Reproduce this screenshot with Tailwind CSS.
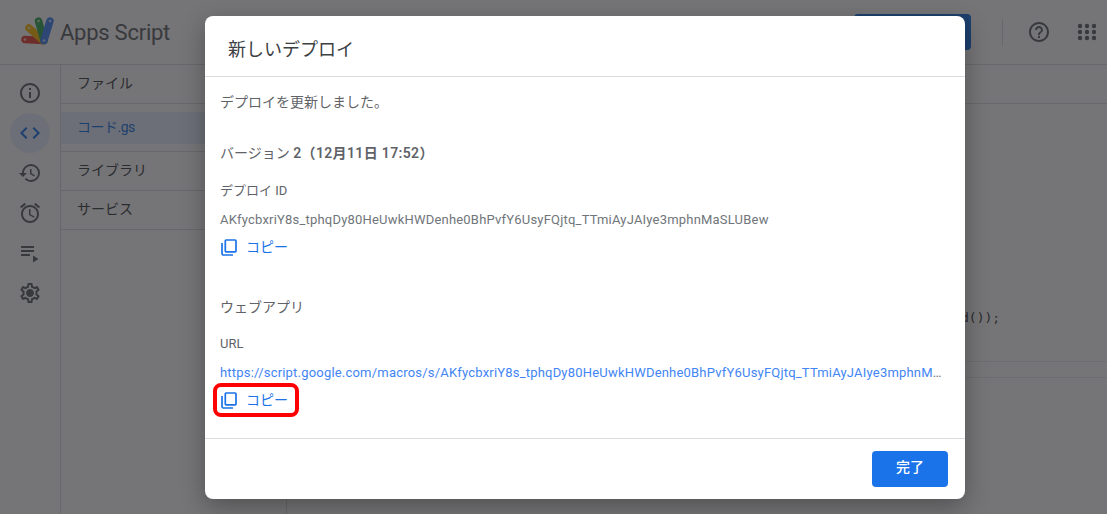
<!DOCTYPE html>
<html lang="ja">
<head>
<meta charset="UTF-8">
<title>Apps Script</title>
<script src="https://cdn.jsdelivr.net/npm/@tailwindcss/browser@4"></script>
</head>
<body class="bg-white overflow-hidden font-['Roboto','Noto_Sans_CJK_JP',sans-serif] text-[#3c4043]">
<div class="relative w-[1107px] h-[514px] overflow-hidden">

  <!-- App behind the dialog -->
  <div class="flex flex-col h-full">
    <header class="h-[65px] shrink-0 flex items-center border-b border-[#dadce0]">
      <svg class="ml-[21px] w-[34px] h-[34px]" viewBox="0 0 34 34" fill="none" stroke-width="7.5" stroke-linecap="round">
        <path d="M4 24.5 22 25.5" stroke="#ea4335"/>
        <path d="M8 13 22 25.5" stroke="#fbbc04"/>
        <path d="M17.5 6 23 25.5" stroke="#34a853"/>
        <path d="M29 6 23 25.5" stroke="#4285f4"/>
        <g fill="#ffffff" stroke="none" opacity=".7">
          <circle cx="4" cy="24.5" r="1.3"/><circle cx="8" cy="13" r="1.3"/><circle cx="17.5" cy="6" r="1.3"/><circle cx="29" cy="6" r="1.3"/><circle cx="23" cy="25.5" r="1.3"/>
        </g>
      </svg>
      <span class="ml-[5px] text-[22px] tracking-[-0.25px] text-[#5f6368]">Apps Script</span>
      <div class="ml-auto w-[117px] h-[36px] mt-[-1px] rounded bg-[#1a73e8]"></div>
      <div class="ml-[31px] w-px h-[27px] bg-[#dadce0]"></div>
      <svg class="ml-[24px] w-6 h-6" viewBox="0 0 24 24" fill="#5f6368"><path d="M11 18h2v-2h-2v2zm1-16C6.48 2 2 6.48 2 12s4.48 10 10 10 10-4.48 10-10S17.52 2 12 2zm0 18c-4.41 0-8-3.59-8-8s3.59-8 8-8 8 3.59 8 8-3.59 8-8 8zm0-14c-2.21 0-4 1.79-4 4h2c0-1.1.9-2 2-2s2 .9 2 2c0 2-3 1.75-3 5h2c0-2.25 3-2.5 3-5 0-2.21-1.79-4-4-4z"/></svg>
      <svg class="ml-[24px] mr-[8px] w-6 h-6" viewBox="0 0 24 24" fill="#5f6368"><circle cx="5" cy="6" r="2.2"/><circle cx="12" cy="6" r="2.2"/><circle cx="19" cy="6" r="2.2"/><circle cx="5" cy="12" r="2.2"/><circle cx="12" cy="12" r="2.2"/><circle cx="19" cy="12" r="2.2"/><circle cx="5" cy="18" r="2.2"/><circle cx="12" cy="18" r="2.2"/><circle cx="19" cy="18" r="2.2"/></svg>
    </header>
    <div class="flex flex-1 min-h-0">
      <!-- Icon rail -->
      <nav class="w-[61px] shrink-0 border-r border-[#dadce0] flex flex-col items-center pt-[8px] pr-px">
        <div class="h-[40px] flex items-center justify-center"><svg class="w-6 h-6" viewBox="0 0 24 24" fill="#5f6368"><path d="M11 7h2v2h-2zm0 4h2v6h-2zm1-9C6.48 2 2 6.48 2 12s4.48 10 10 10 10-4.48 10-10S17.52 2 12 2zm0 18c-4.41 0-8-3.59-8-8s3.59-8 8-8 8 3.59 8 8-3.59 8-8 8z"/></svg></div>
        <div class="w-10 h-10 rounded-full bg-[#e8f0fe] flex items-center justify-center"><svg class="w-6 h-6" viewBox="0 0 24 24" fill="#1a73e8"><path d="M9.4 16.6 4.8 12l4.6-4.6L8 6l-6 6 6 6 1.4-1.4zm5.2 0 4.6-4.6-4.6-4.6L16 6l6 6-6 6-1.4-1.4z"/></svg></div>
        <div class="h-[40px] flex items-center justify-center"><svg class="w-6 h-6" viewBox="0 0 24 24" fill="#5f6368"><path d="M13 3a9 9 0 0 0-9 9H1l3.89 3.89.07.14L9 12H6c0-3.87 3.13-7 7-7s7 3.13 7 7-3.13 7-7 7c-1.93 0-3.68-.79-4.94-2.06l-1.42 1.42A8.954 8.954 0 0 0 13 21a9 9 0 0 0 0-18zm-1 5v5l4.28 2.54.72-1.21-3.5-2.08V8H12z"/></svg></div>
        <div class="h-[40px] flex items-center justify-center"><svg class="w-6 h-6" viewBox="0 0 24 24" fill="#5f6368"><path d="m22 5.72-4.6-3.86-1.29 1.53 4.6 3.86L22 5.72zM7.88 3.39 6.6 1.86 2 5.71l1.29 1.53 4.59-3.85zM12.5 8H11v6l4.75 2.85.75-1.23-4-2.37V8zM12 4c-4.97 0-9 4.03-9 9s4.03 9 9 9 9-4.03 9-9-4.03-9-9-9zm0 16c-3.87 0-7-3.13-7-7s3.13-7 7-7 7 3.13 7 7-3.13 7-7 7z"/></svg></div>
        <div class="h-[40px] flex items-center justify-center"><svg class="w-6 h-6" viewBox="0 0 24 24" fill="#5f6368"><path d="M3 5h13v2H3zm0 4h13v2H3zm0 4h9v2H3zm12 1.5v7l5.5-3.5z"/></svg></div>
        <div class="h-[40px] flex items-center justify-center"><svg class="w-6 h-6" viewBox="0 0 24 24" fill="#5f6368"><path d="M19.43 12.98c.04-.32.07-.64.07-.98s-.03-.66-.07-.98l2.11-1.65c.19-.15.24-.42.12-.64l-2-3.46c-.12-.22-.39-.3-.61-.22l-2.49 1c-.52-.4-1.08-.73-1.69-.98l-.38-2.65A.488.488 0 0 0 14 2h-4c-.25 0-.46.18-.49.42l-.38 2.65c-.61.25-1.17.59-1.69.98l-2.49-1c-.23-.09-.49 0-.61.22l-2 3.46c-.13.22-.07.49.12.64l2.11 1.65c-.04.32-.07.65-.07.98s.03.66.07.98l-2.11 1.65c-.19.15-.24.42-.12.64l2 3.46c.12.22.39.3.61.22l2.49-1c.52.4 1.08.73 1.69.98l.38 2.65c.03.24.24.42.49.42h4c.25 0 .46-.18.49-.42l.38-2.65c.61-.25 1.17-.59 1.69-.98l2.49 1c.23.09.49 0 .61-.22l2-3.46c.12-.22.07-.49-.12-.64l-2.11-1.65zM17.45 11.27c.04.31.05.52.05.73 0 .21-.02.43-.05.73l-.14 1.13.89.7 1.08.84-.7 1.21-1.27-.51-1.04-.42-.9.68c-.43.32-.84.56-1.25.73l-1.06.43-.16 1.13-.2 1.35h-1.4l-.19-1.35-.16-1.13-1.06-.43c-.43-.18-.83-.41-1.23-.71l-.91-.7-1.06.43-1.27.51-.7-1.21 1.08-.84.89-.7-.14-1.13c-.03-.31-.05-.54-.05-.74s.02-.43.05-.73l.14-1.13-.89-.7-1.08-.84.7-1.21 1.27.51 1.04.42.9-.68c.43-.32.84-.56 1.25-.73l1.06-.43.16-1.13.2-1.35h1.39l.19 1.35.16 1.13 1.06.43c.43.18.83.41 1.23.71l.91.7 1.06-.43 1.27-.51.7 1.21-1.07.85-.89.7.14 1.13zM12 8c-2.21 0-4 1.79-4 4s1.79 4 4 4 4-1.79 4-4-1.79-4-4-4z"/></svg></div>
      </nav>
      <!-- File panel -->
      <aside class="w-[226px] shrink-0 border-r border-[#dadce0] text-[14px]">
        <div class="h-[39px] flex items-center pl-4 border-b border-[#dadce0] pb-[2px]">ファイル</div>
        <div class="h-[48px] flex items-center border-b border-[#dadce0]"><div class="w-full h-[32px] flex items-center pl-4 bg-[#e8f0fe] text-[#1a73e8] tracking-[-0.5px]">コード.gs</div></div>
        <div class="h-[39px] flex items-center pl-4 border-b border-[#dadce0] pb-[2px]">ライブラリ</div>
        <div class="h-[39px] flex items-center pl-4 border-b border-[#dadce0] pb-[2px]">サービス</div>
      </aside>
      <!-- Editor -->
      <main class="flex-1 flex flex-col min-w-0">
        <div class="h-[39px] shrink-0 border-b border-[#dadce0]"></div>
        <div class="h-[258px] shrink-0 flex flex-col justify-end border-b border-[#e8eaed]">
          <div class="pl-[674px] pb-[34px] h-[72px] flex items-end whitespace-nowrap font-['DejaVu_Sans_Mono',monospace] text-[13px] leading-[18px] text-[#3c4043]">d());</div>
        </div>
        <div class="h-[16px] shrink-0 border-b border-[#e8eaed]"></div>
      </main>
    </div>
  </div>

  <!-- Scrim -->
  <div class="absolute inset-0 bg-[#202124]/[.62]"></div>

  <!-- Dialog -->
  <section class="absolute left-[205px] top-[16px] w-[760px] h-[483px] bg-white rounded-[8px] shadow-[0_8px_24px_rgba(0,0,0,0.3)] flex flex-col">
    <h2 class="h-[61px] shrink-0 flex items-center pl-[23px] pt-[6px] border-b border-[#dadce0] text-[18px] font-normal">新しいデプロイ</h2>
    <div class="flex-1 min-h-0 pl-[15px] pr-[21px] flex flex-col">
      <p class="mt-[15px] text-[14px] leading-[20px] text-[#5f6368]">デプロイを更新しました。</p>
      <p class="mt-[31px] text-[14px] leading-[20px] text-[#5f6368]">バージョン <b class="font-semibold tracking-[.35px]">2（12月11日 17:52）</b></p>
      <p class="mt-[18px] text-[13px] leading-[20px] text-[#5f6368]">デプロイ ID</p>
      <p class="mt-[9px] text-[13px] leading-[20px] tracking-[.2px] text-[#70757a] whitespace-nowrap">AKfycbxriY8s_tphqDy80HeUwkHWDenhe0BhPvfY6UsyFQjtq_TTmiAyJAIye3mphnMaSLUBew</p>
      <a class="mt-[5px] flex items-center h-[24px] text-[14px] text-[#1a73e8]">
        <svg class="ml-[1px] w-[16px] h-[17px]" viewBox="0 0 16 17" fill="none" stroke="#1a73e8" stroke-width="1.7"><rect x="4.3" y="1" width="10.7" height="11.8" rx=".8"/><path d="M1 4v10.5A1.5 1.5 0 0 0 2.5 16H12"/></svg>
        <span class="ml-[9px]">コピー</span>
      </a>
      <p class="mt-[38px] text-[14px] leading-[20px] text-[#5f6368]">ウェブアプリ</p>
      <p class="mt-[17px] text-[13px] leading-[20px] text-[#5f6368]">URL</p>
      <p class="mt-[9px] text-[13px] leading-[20px] tracking-[.2px] text-[#70757a] truncate"><span class="text-[#4285f4]">https://script.google.com/macros/s/AKfycbxriY8s_tphqDy80HeUwkHWDenhe0BhPvfY6UsyFQjtq_TTmiAyJAIye3mphnMaSLUBew/exec</span></p>
      <a class="relative mt-[5px] flex items-center h-[24px] text-[14px] text-[#1a73e8]">
        <svg class="ml-[1px] w-[16px] h-[17px]" viewBox="0 0 16 17" fill="none" stroke="#1a73e8" stroke-width="1.7"><rect x="4.3" y="1" width="10.7" height="11.8" rx=".8"/><path d="M1 4v10.5A1.5 1.5 0 0 0 2.5 16H12"/></svg>
        <span class="ml-[9px]">コピー</span>
        <span class="absolute left-[-7px] top-[-5px] w-[86px] h-[34px] border-[4px] border-[#ff0000] rounded-[8px]"></span>
      </a>
    </div>
    <footer class="h-[61px] shrink-0 border-t border-[#dadce0] flex items-center justify-end pr-[17px]">
      <button class="w-[76px] h-[36px] pb-[3px] rounded bg-[#1a73e8] text-white text-[14px] font-medium">完了</button>
    </footer>
  </section>
</div>
</body>
</html>
